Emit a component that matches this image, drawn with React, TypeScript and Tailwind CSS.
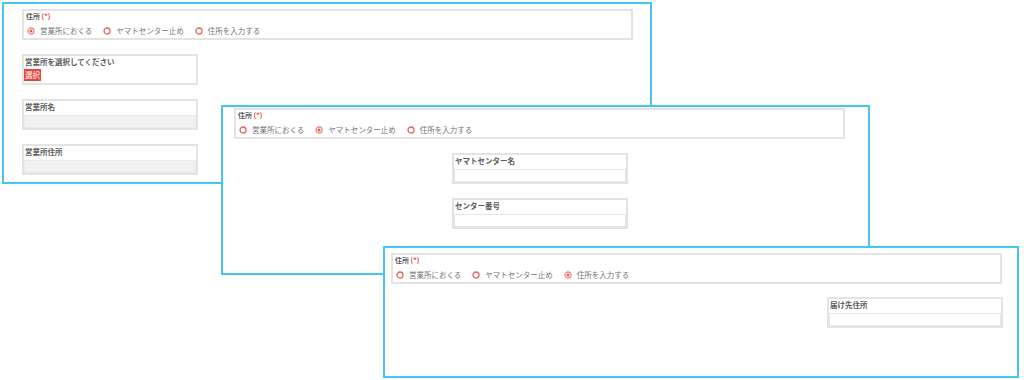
import React from "react";

const FONT = { fontFamily: '"Noto Sans CJK JP", "Noto Sans", sans-serif' };

function Radio({ checked }: { checked: boolean }) {
  return (
    <svg width="8" height="8" viewBox="0 0 8 8" className="shrink-0">
      <circle cx="4" cy="4" r="3" fill="none" stroke={checked ? "#eb8a84" : "#e8625a"} strokeWidth="1.3" />
      {checked && <circle cx="4" cy="4" r="1.5" fill="#e25b53" />}
    </svg>
  );
}

const OPTIONS = ["営業所におくる", "ヤマトセンター止め", "住所を入力する"];

function AddressFieldset({ checked }: { checked: number }) {
  return (
    <div className="w-[611px] h-[31px] border-2 border-[#e3e3e3] px-[1px] shrink-0">
      <div className="h-[11px] leading-[11px] text-[7px] font-semibold text-[#5c5c5c] pl-[1px]">
        住所 <span className="text-[#e5443c]">(*)</span>
      </div>
      <div className="mt-[3px] h-[12px] flex items-center gap-[11px] pl-[2px] text-[7.5px] text-[#737373]">
        {OPTIONS.map((o, i) => (
          <div key={o} className="flex items-center gap-[5px]">
            <Radio checked={checked === i} />
            <span className="leading-[12px]">{o}</span>
          </div>
        ))}
      </div>
    </div>
  );
}

function FieldBox({ label, grey }: { label: string; grey?: boolean }) {
  return (
    <div className="w-[176px] h-[31px] border-2 border-[#e3e3e3] flex flex-col shrink-0">
      <div className="h-[11px] leading-[11px] pl-[1px] text-[7.5px] font-semibold text-[#5c5c5c]">{label}</div>
      <div
        className={
          grey
            ? "mt-[3px] h-[13px] border border-[#e9e9e9] bg-[#f1f1f1]"
            : "mt-[3px] h-[13px] border border-[#e6e6e6] bg-white"
        }
      />
    </div>
  );
}

function SelectBox() {
  return (
    <div className="w-[176px] h-[31px] border-2 border-[#e3e3e3] flex flex-col shrink-0">
      <div className="h-[11px] leading-[11px] pl-[1px] text-[7.5px] font-semibold text-[#5c5c5c]">営業所を選択してください</div>
      <div className="mt-[2px] w-[17px] h-[12px] bg-[#e5483f] text-white text-[7.5px] leading-[12px] text-center">選択</div>
    </div>
  );
}

export default function App() {
  return (
    <div className="relative w-[1024px] h-[380px] bg-white overflow-hidden" style={FONT}>
      {/* Panel 1 */}
      <div className="absolute left-[2px] top-[2px] w-[650px] h-[182px] border-2 border-[#45c6f2] bg-white pl-[18px] pt-[5px] flex flex-col">
        <AddressFieldset checked={0} />
        <div className="mt-[14px] flex flex-col gap-[14px]">
          <SelectBox />
          <FieldBox label="営業所名" grey />
          <FieldBox label="営業所住所" grey />
        </div>
      </div>

      {/* Panel 2 */}
      <div className="absolute left-[221px] top-[105px] w-[649px] h-[170px] border-2 border-[#45c6f2] bg-white pl-[11px] pt-[1px] flex flex-col">
        <AddressFieldset checked={1} />
        <div className="mt-[14px] ml-[218px] flex flex-col gap-[14px]">
          <FieldBox label="ヤマトセンター名" />
          <FieldBox label="センター番号" />
        </div>
      </div>

      {/* Panel 3 */}
      <div className="absolute left-[383px] top-[246px] w-[636px] h-[132px] border-2 border-[#45c6f2] bg-white pl-[6px] pt-[5px] flex flex-col">
        <AddressFieldset checked={2} />
        <div className="mt-[13px] ml-[436px] flex flex-col">
          <FieldBox label="届け先住所" />
        </div>
      </div>
    </div>
  );
}
